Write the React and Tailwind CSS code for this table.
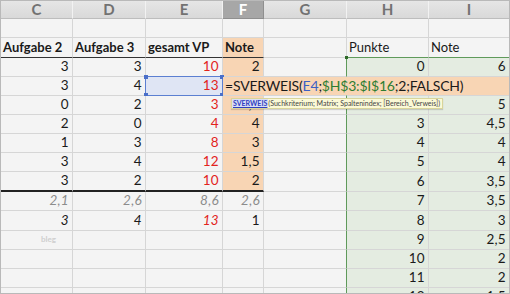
import React from "react";

// column geometry of the sheet
const COLS = [
  { key: "C", w: "w-[72px]" },
  { key: "D", w: "w-[73px]" },
  { key: "E", w: "w-[77px]" },
  { key: "F", w: "w-[41px]" },
  { key: "G", w: "w-[83px]" },
  { key: "H", w: "w-[82px]" },
  { key: "I", w: "w-[81px]" },
];

const RED = "text-[#e2231c]";
const GREY_IT = "italic text-[#8c8c8c]";
const BLK_IT = "italic text-[#1a1a1a]";

// each row: height class + cells C..I as [text, extra classes]
const ROWS = [
  { h: "h-[19px]", cells: [] },
  {
    h: "h-[20px]",
    head: true,
    cells: [["Aufgabe 2"], ["Aufgabe 3"], ["gesamt VP"], ["Note"], [""], ["Punkte"], ["Note"]],
  },
  { h: "h-[19px]", cells: [["3"], ["3"], ["10", RED], ["2"], [""], ["0"], ["6"]] },
  { h: "h-[19px]", edit: true, cells: [["3"], ["4"], ["13", RED], [""], [""], [""], [""]] },
  { h: "h-[19px]", cells: [["0"], ["2"], ["3", RED], ["4,5"], [""], ["2"], ["5"]] },
  { h: "h-[19px]", cells: [["2"], ["0"], ["4", RED], ["4"], [""], ["3"], ["4,5"]] },
  { h: "h-[19px]", cells: [["1"], ["3"], ["8", RED], ["3"], [""], ["4"], ["4"]] },
  { h: "h-[19px]", cells: [["3"], ["4"], ["12", RED], ["1,5"], [""], ["5"], ["4"]] },
  { h: "h-[20px]", total: true, cells: [["3"], ["2"], ["10", RED], ["2"], [""], ["6"], ["3,5"]] },
  { h: "h-[19px]", cells: [["2,1", GREY_IT], ["2,6", GREY_IT], ["8,6", GREY_IT], ["2,6", GREY_IT], [""], ["7"], ["3,5"]] },
  { h: "h-[20px]", cells: [["3", BLK_IT], ["4", BLK_IT], ["13", "italic text-[#e2231c]"], ["1"], [""], ["8"], ["3"]] },
  { h: "h-[19px]", mark: true, cells: [[""], [""], [""], [""], [""], ["9"], ["2,5"]] },
  { h: "h-[19px]", cells: [[""], [""], [""], [""], [""], ["10"], ["2"]] },
  { h: "h-[19px]", cells: [[""], [""], [""], [""], [""], ["11"], ["2"]] },
  { h: "h-[19px]", cells: [[""], [""], [""], [""], [""], ["12"], ["1,5"]] },
];

function Handle({ className }) {
  return <span className={`absolute w-[4px] h-[4px] bg-[#4a6fc9] ${className}`} />;
}

function FormulaEditor() {
  return (
    <div className="absolute left-0 top-0 z-10 h-full w-[290px] bg-[#f8d5b4] flex items-center pl-[2px] text-[14px] tracking-[-0.2px] leading-none text-[#1a1a1a] whitespace-nowrap">
      <span>=SVERWEIS(</span>
      <span className="text-[#3b5fc4]">E4</span>
      <span>;</span>
      <span className="text-[#2e7d32]">$H$3:$I$16</span>
      <span>;2;FALSCH)</span>
      <div className="absolute left-[8px] top-[21px] h-[11px] flex items-center bg-[#fbf9d6] border border-[#d9d59a] pr-[2px] text-[7px] tracking-normal leading-none text-[#444] shadow-[0_1px_1px_rgba(0,0,0,0.15)]">
        <span className="bg-[#d9def5] text-[#2f3fbf] underline font-bold px-[1px] h-full flex items-center">SVERWEIS</span>
        <span>(Suchkriterium; Matrix; Spaltenindex; [Bereich_Verweis])</span>
      </div>
    </div>
  );
}

function Cell({ col, ci, ri, row }) {
  const [text = "", extra = "text-[#1a1a1a]"] = row.cells[ci] || [];
  const orange = col.key === "F" && ri >= 1 && ri <= 8;
  const green = (col.key === "H" || col.key === "I") && ri >= 2;
  const selected = row.edit && col.key === "E";

  let bg = "bg-[#f4f4f4]";
  if (orange) bg = "bg-[#f8d5b4]";
  if (green) bg = "bg-[#e4ece1]";
  if (selected) bg = "bg-[#dfe5f4]";

  // bottom border: dark rule under header and totals in C..F, green top of lookup range
  let bb = "border-b border-b-[#d6d6d6]";
  if (ci <= 3 && (row.head || row.total)) bb = row.total ? "border-b-2 border-b-[#222]" : "border-b border-b-[#333]";
  if (row.head && ci >= 5) bb = "border-b border-b-[#5f9a5a]";

  let br = "border-r border-r-[#d6d6d6]";
  if (col.key === "G" && ri >= 2) br = "border-r border-r-[#5f9a5a]";

  const align = row.head
    ? `justify-start pl-[2px] text-[13px] ${ci >= 5 ? "font-normal" : "font-bold"}`
    : "justify-end pr-[3px] text-[13.5px] tracking-[0.3px]";

  return (
    <div className={`relative ${col.w} shrink-0 h-full flex items-center ${align} ${bg} ${bb} ${br} leading-none whitespace-nowrap ${extra}`}>
      {text}
      {selected && (
        <span className="absolute -left-px -top-px -right-px -bottom-px border border-[#5b7fd1]">
          <Handle className="-left-[2px] -top-[2px]" />
          <Handle className="-right-[2px] -top-[2px]" />
          <Handle className="-left-[2px] -bottom-[2px]" />
          <Handle className="-right-[2px] -bottom-[2px]" />
        </span>
      )}
      {row.edit && col.key === "F" && <FormulaEditor />}
      {ri === 2 && col.key === "H" && (
        <span className="absolute -left-[2px] -top-[2px] w-[3px] h-[3px] bg-[#2f6b2b]" />
      )}
      {row.mark && col.key === "C" && (
        <span className="absolute left-[40px] top-[4px] text-[8px] font-bold tracking-normal text-[#cfcfcf]">bleg</span>
      )}
    </div>
  );
}

export default function App() {
  return (
    <div className="w-[510px] h-[294px] overflow-hidden border border-[#b9b9b9] bg-[#f4f4f4] font-['Lato',sans-serif]">
      {/* column letters */}
      <div className="flex h-[18px]">
        {COLS.map((c) => (
          <div
            key={c.key}
            className={`${c.w} shrink-0 flex items-center justify-center border-b border-r text-[15px] font-bold leading-none ${
              c.key === "F"
                ? "bg-[#a7a7a7] text-white border-[#8f8f8f]"
                : "bg-gradient-to-b from-[#e6e6e6] to-[#d9d9d9] text-[#727272] border-b-[#bdbdbd] border-r-[#f2f2f2]"
            }`}
          >
            {c.key}
          </div>
        ))}
      </div>
      {ROWS.map((row, ri) => (
        <div key={ri} className={`flex ${row.h}`}>
          {COLS.map((col, ci) => (
            <Cell key={col.key} col={col} ci={ci} ri={ri} row={row} />
          ))}
        </div>
      ))}
    </div>
  );
}
